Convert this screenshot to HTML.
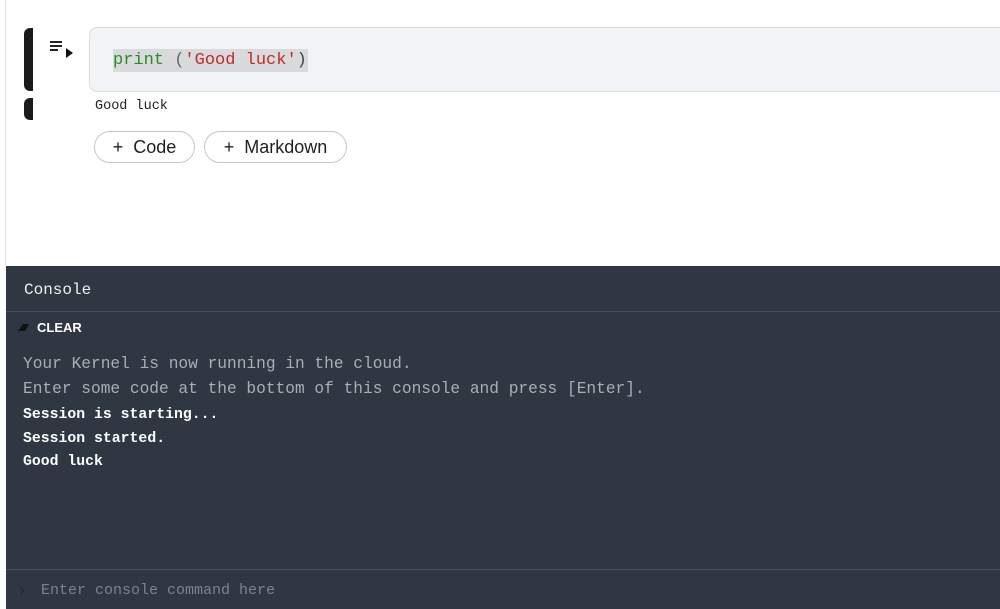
<!DOCTYPE html>
<html><head><style>
body{margin:0;width:1000px;height:609px;background:#fff;position:relative;overflow:hidden;font-family:"Liberation Sans",sans-serif}
.abs{position:absolute}
.mono{font-family:"Liberation Mono","DejaVu Sans Mono",monospace}
</style></head><body>
<div class="abs" style="left:5px;top:0;width:1px;height:266px;background:#e0e0e0"></div>
<div class="abs" style="left:24px;top:28px;width:9px;height:63px;background:#1b1b1b;border-radius:6px 0 0 6px"></div>
<div class="abs" style="left:24px;top:98px;width:9px;height:22px;background:#1b1b1b;border-radius:6px 0 0 6px"></div>
<svg class="abs" style="left:50px;top:40px" width="26" height="20" viewBox="0 0 26 20"><rect x="0" y="1" width="12" height="2" fill="#222"/><rect x="0" y="5" width="12" height="2" fill="#222"/><rect x="0" y="9" width="8" height="2" fill="#222"/><path d="M16 8 L23 13 L16 18Z" fill="#111"/></svg>
<div class="abs" style="left:89px;top:27px;width:920px;height:63px;background:#f1f3f4;border:1px solid #dadce0;border-radius:8px"></div>
<div class="abs mono" style="left:113px;top:49px;font-size:17px;line-height:22px;padding-top:1px;background:#d9dadb;padding-right:1px"><span style="color:#2a8a2a">print</span> <span style="color:#666">(</span><span style="color:#c82828">'Good luck'</span><span style="color:#444">)</span></div>
<div class="abs mono" style="left:95px;top:99px;font-size:13.5px;color:#222">Good luck</div>
<div class="abs" style="left:94px;top:131px;width:99px;height:30px;border:1px solid #c6c6c6;border-radius:16px;font-size:18px;color:#202124;line-height:31px;text-align:center">+&nbsp; Code</div>
<div class="abs" style="left:204px;top:131px;width:141px;height:30px;border:1px solid #c6c6c6;border-radius:16px;font-size:18px;color:#202124;line-height:31px;text-align:center">+&nbsp; Markdown</div>
<div class="abs" style="left:6px;top:266px;width:994px;height:343px;background:#2f3742"></div>
<div class="abs mono" style="left:24px;top:281px;font-size:16px;color:#f0f0f0">Console</div>
<div class="abs" style="left:6px;top:311px;width:994px;height:1px;background:#46505c"></div>
<svg class="abs" style="left:17px;top:322px" width="14" height="10"><path d="M1 9 L6 2 L12 2 L8 9Z" fill="#111"/></svg>
<div class="abs" style="left:37px;top:320px;font-size:13px;font-weight:bold;color:#fff">CLEAR</div>
<div class="abs mono" style="left:23px;top:352px;font-size:16.2px;line-height:25px;color:#a9aeb5">Your Kernel is now running in the cloud.<br>Enter some code at the bottom of this console and press [Enter].</div>
<div class="abs mono" style="left:23px;top:404px;font-size:14.8px;line-height:23.5px;color:#fff;font-weight:bold">Session is starting...<br>Session started.<br>Good luck</div>
<div class="abs" style="left:6px;top:569px;width:994px;height:1px;background:#46505c"></div>
<div class="abs" style="left:19px;top:580px;font-size:18px;color:#222a33">›</div>
<div class="abs mono" style="left:41px;top:582px;font-size:15px;color:#7c838c">Enter console command here</div>
</body></html>
